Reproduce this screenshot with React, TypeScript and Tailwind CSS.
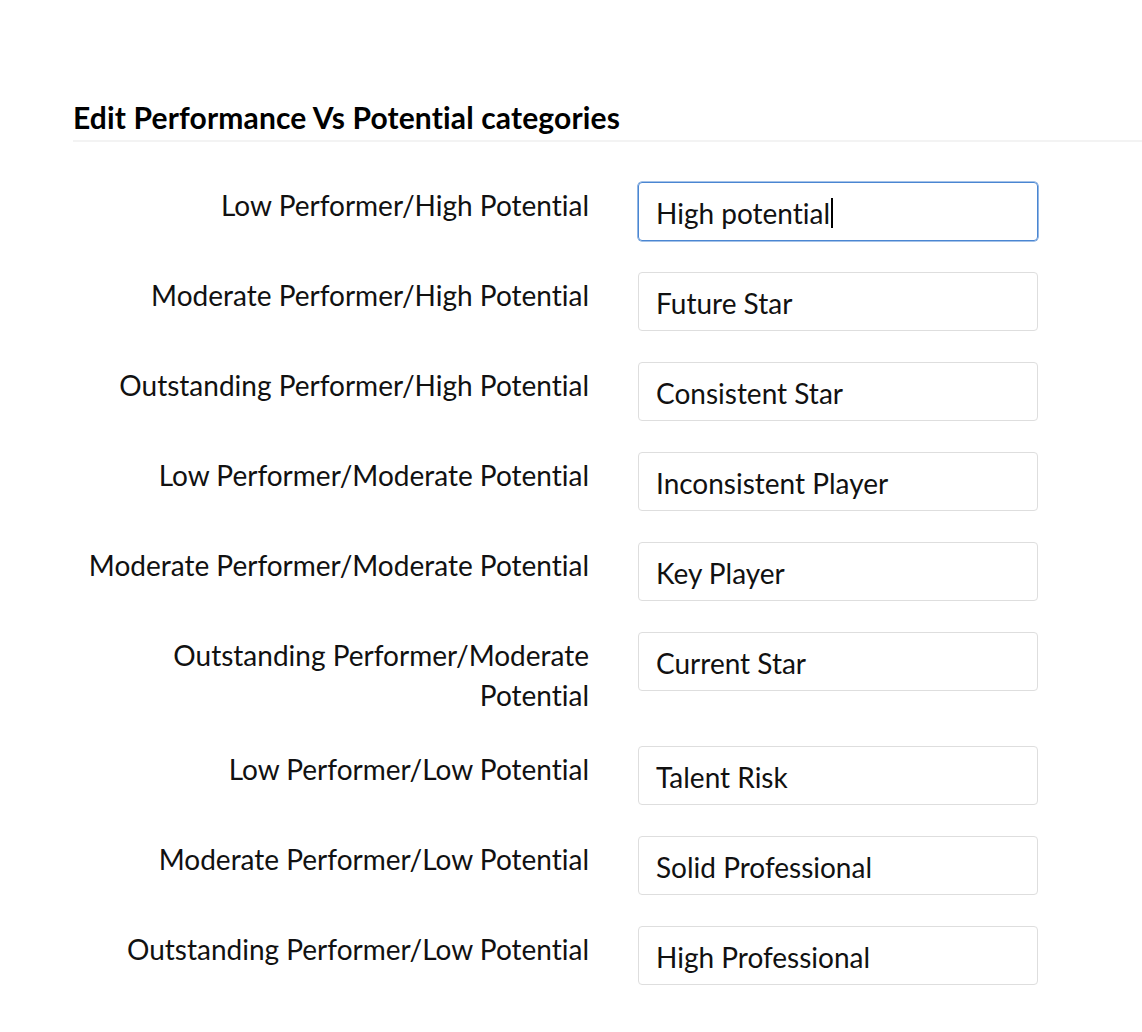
import React from "react";

const rows: [string, string][] = [
  ["Low Performer/High Potential", "High potential"],
  ["Moderate Performer/High Potential", "Future Star"],
  ["Outstanding Performer/High Potential", "Consistent Star"],
  ["Low Performer/Moderate Potential", "Inconsistent Player"],
  ["Moderate Performer/Moderate Potential", "Key Player"],
  ["Outstanding Performer/Moderate Potential", "Current Star"],
  ["Low Performer/Low Potential", "Talent Risk"],
  ["Moderate Performer/Low Potential", "Solid Professional"],
  ["Outstanding Performer/Low Potential", "High Professional"],
];

export default function App() {
  return (
    <div
      className="min-h-[1032px] w-[1142px] bg-white text-[#111] [font-variant-ligatures:none]"
      style={{ fontFamily: "Lato, 'Noto Sans', sans-serif" }}
    >
      <div className="pl-[73px] pt-[99px]">
        <h2 className="border-b-2 border-[#f3f3f3] pb-[5px] text-[30px] font-bold leading-[36px] tracking-[0.15px] text-black">
          Edit Performance Vs Potential categories
        </h2>
        <div className="flex flex-col gap-[31px] pt-[40px]">
          {rows.map(([label, value], i) => (
            <div key={label} className="flex items-start">
              <div className="w-[516px] pt-[3px] text-right text-[28px] leading-[40px]">
                {label}
              </div>
              <div
                className={
                  i === 0
                    ? "ml-[49px] flex h-[59px] w-[400px] items-center rounded-[4px] border border-[#4a86d2] px-[17px] pt-[3px] text-[28px] shadow-[0_0_0_0.6px_#4a86d2]"
                    : "ml-[49px] flex h-[59px] w-[400px] items-center rounded-[4px] border border-[#dedede] px-[17px] pt-[3px] text-[28px]"
                }
              >
                <span>{value}</span>
                {i === 0 && <span className="ml-[1px] inline-block h-[30px] w-[2px] bg-black" />}
              </div>
            </div>
          ))}
        </div>
      </div>
    </div>
  );
}
